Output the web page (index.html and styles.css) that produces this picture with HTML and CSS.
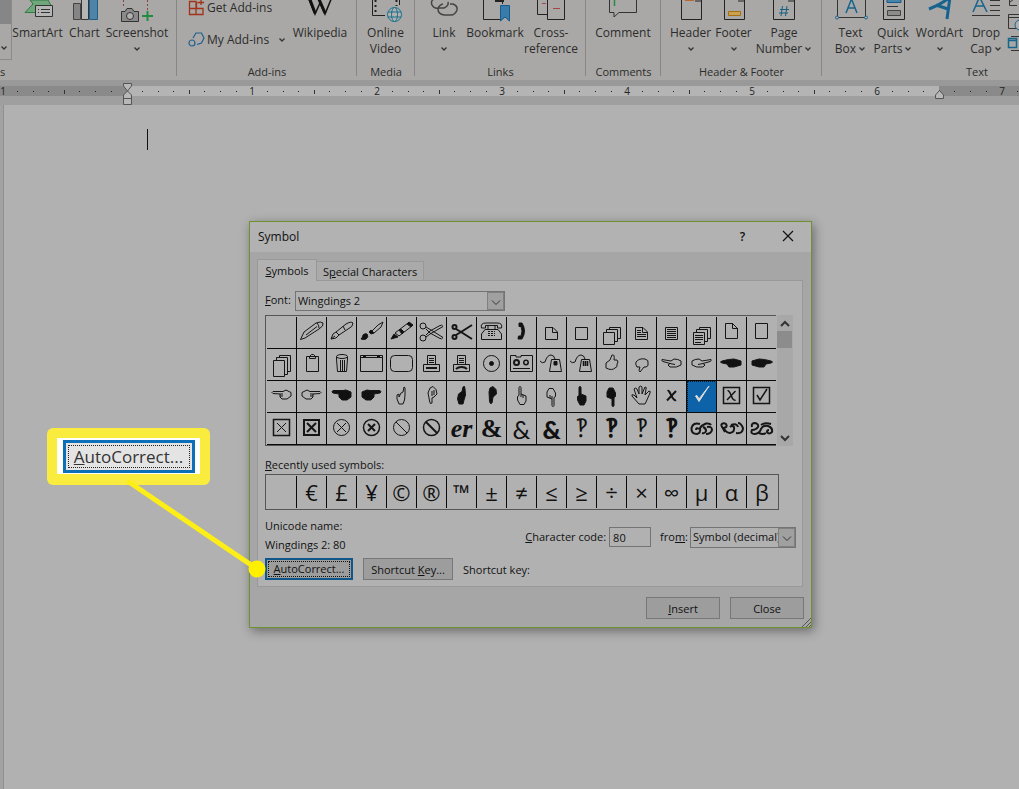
FILE: index.html
```html
<!DOCTYPE html>
<html lang="en">
<head>
<meta charset="utf-8">
<title>Symbol</title>
<link rel="stylesheet" href="styles.css">
</head>
<body>
<svg class="defs" aria-hidden="true">
  <defs>
    <symbol id="chev"><path d="M1.500 1.500L4 4L6.500 1.500" fill="none" stroke="#333" stroke-width="1.300"/></symbol>
    <symbol id="pen"><path d="M3.500 22.500L7 15L19 6Q24 4 26 6Q27 9 22 12L8 21ZM9 18L20 9.500M20 6Q22 8 22 11"/></symbol>
    <symbol id="nib"><path d="M4 22L6 17L9 15L19 7Q24 4 26 6Q26 10 21 12L12 18L9 21ZM9 15L12 18M16 9L18 13M4 22L8 19"/></symbol>
    <symbol id="brush"><path d="M14 15L21 8L26 5L24 10L17 16Z"/><path class="f" d="M4 22Q6 20 6 18Q8 16 10 17Q12 20 9 22Q7 23 4 22ZM12 15L14 13L17 16L14 17Z"/></symbol>
    <symbol id="crayon"><path d="M8 16L21 6L25 9L12 19Z"/><path class="f" d="M4 22L7 17L11 20ZM12 13L14 12L17 15L15 17ZM20 7L22 5L26 8L24 10Z"/></symbol>
    <symbol id="sciss"><circle cx="6" cy="9" r="3"/><circle cx="6" cy="21" r="3"/><path d="M9 10L14 13L26 20.500Q25 23 22 21L13 16L9 12M9 20L13 17L26 9.500Q25 7 22 9L13 14L9 18"/></symbol>
    <symbol id="scissb"><g class="b"><circle cx="7.500" cy="10" r="2"/><circle cx="7.500" cy="20" r="2"/><path d="M9 12L14 15L25 22M9 18L14 15L25 8"/></g></symbol>
    <symbol id="phone"><path d="M4.500 11Q3 6 9 6H20Q26 6 24.500 11H20.500V8.500H8.500V11ZM8 12.500H21L24.500 17V22.500H4.500V17ZM11 8V12M18 8V12"/><path d="M11 14.500H18M11 16.500H18M11 18.500H18" stroke-dasharray="2 1"/></symbol>
    <symbol id="handset"><path class="f" d="M12 6H15Q20 14 15 22H11L11.500 19H14Q16 14 14 9.500H12Z"/></symbol>
    <symbol id="fold"><path d="M8.500 10.500H16L20.500 15V22.500H8.500ZM15.500 10V15.500H21"/></symbol>
    <symbol id="square"><path d="M8.500 10.500H20.500V22.500H8.500Z"/></symbol>
    <symbol id="stack"><path d="M6.500 15.500H17.500V27.500H6.500ZM9.500 15V12.500H20.500V24.500H18M12.500 12V10.500H23.500V21.500H21"/></symbol>
    <symbol id="foldtext"><use href="#fold"/><path d="M10 13.500H14M10 15.500H14M10 17.500H19M10 19.500H19"/></symbol>
    <symbol id="text"><use href="#square"/><path d="M10 12.500H19M10 14.500H19M10 16.500H19M10 18.500H19M10 20.500H19"/></symbol>
    <symbol id="stacktext"><use href="#stack"/><path d="M8 18.500H16M8 20.500H16M8 22.500H16M8 25.500H14"/></symbol>
    <symbol id="tallfold"><path d="M8.500 6.500H15.500L20.500 11.500V21.500H8.500ZM15.500 6V11.500H21"/></symbol>
    <symbol id="tall"><path d="M8.500 6.500H20.500V21.500H8.500Z"/></symbol>
    <symbol id="tallstack"><path d="M6.500 11.500H17.500V27.500H6.500ZM9.500 11V8.500H20.500V25.500H18M12.500 8V6.500H23.500V22.500H21"/></symbol>
    <symbol id="clip"><path d="M9.500 7.500H21.500V22.500H9.500ZM12.500 9.500V7.500L14.500 5.500H16.500L18.500 7.500V9.500Z"/></symbol>
    <symbol id="trash"><ellipse cx="15" cy="7.500" rx="5.500" ry="2"/><path d="M9.500 8V10L10.500 22.500H19.500L20.500 10V8M13.500 11V22M15.500 11V22M17.500 11V22"/></symbol>
    <symbol id="window"><path d="M3.500 6.500H25.500V22.500H3.500ZM3 8.500H26"/><path class="b" d="M6 7.500H9M20 7.500H23"/></symbol>
    <symbol id="round"><rect x="3.500" y="6.500" width="22" height="16" rx="4"/></symbol>
    <symbol id="printer"><path d="M10.500 15V6.500H18.500V15M6.500 15.500H22.500V22.500H6.500ZM12 9.500H17M12 11.500H17M12 13.500H17"/><path class="b" d="M9 19H20"/></symbol>
    <symbol id="fax"><path d="M10.500 15V6.500H18.500V15M6.500 15.500H22.500V22.500H6.500ZM12 9.500H17M12 11.500H17M12 13.500H17"/><path class="b" d="M9 20Q11 18 14.500 18Q18 18 20 20"/></symbol>
    <symbol id="disc"><circle cx="14.500" cy="14.500" r="8"/><circle class="f" cx="14.500" cy="14.500" r="2"/></symbol>
    <symbol id="tape"><path d="M3.500 6.500H9V8H14V6.500H25.500V22.500H3.500ZM6 19.500H23"/><circle class="b" cx="9.500" cy="13.500" r="2.500"/><circle class="m" cx="19" cy="13.500" r="2.200"/></symbol>
    <symbol id="mouse"><path d="M3 12Q5 15 8 13Q10 6 14 6Q17 6 18 10M14.500 10.500H22.500L24.500 22.500H12.500Z"/><path class="f" d="M17 12.500H20V16H17Z"/></symbol>
    <symbol id="mouse3"><path d="M3 12Q5 15 8 13Q10 6 14 6Q17 6 18 10M14.500 10.500H22.500L24.500 22.500H12.500Z"/><path class="m" d="M16.500 12V17M18.500 12V17M20.500 12V17"/></symbol>
    <symbol id="thup"><path d="M9 14L13 11L15 6Q18 5 17 11H20Q22 13 20 15Q21 18 18 19Q15 22 9 19Z"/></symbol>
    <symbol id="thdn"><path d="M9 13Q12 9 18 10Q22 11 21 14Q22 17 19 18L17 18L13 23Q11 22 13 18H10Q8 15 9 13Z"/></symbol>
    <symbol id="left"><path d="M6 10.500H16L19 9L22 10.500L24 11.500V15L20 18H15L13 16V13L6 12.500Q4 11.500 6 10.500ZM13 13H16M13 15H16"/></symbol>
    <symbol id="left2"><path d="M5 10.500L14 12L17 10Q21 10 24 12V16Q20 19 13 18L11 16L13 14.500L6 12.500Q4 11.500 5 10.500ZM13 14.500L18 15.500"/></symbol>
    <symbol id="leftb"><path class="f" d="M6 9.500H16L19 9L24 11V16L20 19H15L12 16V13L6 12Q4 11 6 9.500Z"/></symbol>
    <symbol id="leftb2"><path class="f" d="M5 12Q12 10 17 10L24 12V16L17 18H12L10 15L5 14Q2 13 5 12Z"/></symbol>
    <symbol id="up"><path d="M17 6Q18.500 6 18 9V14L17.500 19L16 23H12L10 18V14L12 13V16L14 12L16 11Z"/></symbol>
    <symbol id="up2"><path d="M12 17L11 12L13 7L16 5.500L19 8.500L20 13L17 16L15 17V22Q13 24 12.500 20ZM15 10V15M17 9V14"/></symbol>
    <symbol id="upb"><path class="f" d="M16 6Q18 4 18 8L18.500 14L17 19L16 23H12L10.500 18L11.500 13L15 10.500Z"/></symbol>
    <symbol id="dnb"><path class="f" d="M12 11L13 7L16 5.500L19 8.500L19.500 13L16 16L15 22Q13 24 12.500 20Z"/></symbol>
    <symbol id="index"><path d="M12 6.500Q13 4 14 6.500V13L19 15V20L17 23.500H13L10.500 19V15.500L12 14.500ZM14 13V16M16 14V17"/></symbol>
    <symbol id="indexb"><path class="f" d="M12 6.500Q13 4 14 6.500V13L19 15V20L17 24H13L10.500 19V15.500L12 14.500Z"/></symbol>
    <symbol id="hand"><path d="M12 23L5 15Q4 13 7 14L10 17L7 8Q8 6 10 8L12 13L12 6Q14 4 15 6V13L18 6Q20 6 19 8L18 14L22 10Q24 10 23 12L19 21L18 23Z"/></symbol>
    <symbol id="x"><path class="b" d="M10.500 10Q12 9 14 14Q17 20 19 19M19 10L10 19.500"/></symbol>
    <symbol id="check"><path class="w" d="M8.500 15L10 14.500L12 18L22 5L12 20.500Z"/></symbol>
    <symbol id="xbox"><path class="m" d="M6.500 6.500H22.500V22.500H6.500Z"/><path class="m" d="M10.500 10Q12 9 14 14Q16 20 18.500 19M18.500 10L10 19"/></symbol>
    <symbol id="cbox"><path class="m" d="M6.500 6.500H22.500V22.500H6.500Z"/><path class="m" d="M10 14L13 19L20 8"/></symbol>
    <symbol id="bx"><path class="m" d="M6.500 6.500H22.500V22.500H6.500Z"/><path d="M10 10L19 19M19 10L10 19"/></symbol>
    <symbol id="bxb"><path class="b" d="M7 7H22V22H7ZM10 10L19 19M19 10L10 19"/></symbol>
    <symbol id="cx"><circle cx="14.500" cy="14.500" r="8"/><path d="M10 10L19 19M19 10L10 19"/></symbol>
    <symbol id="cxb"><circle class="m" cx="14.500" cy="14.500" r="8"/><path class="b" d="M11 11L18 18M18 11L11 18"/></symbol>
    <symbol id="no"><circle cx="14.500" cy="14.500" r="8"/><path d="M9 9L20 20"/></symbol>
    <symbol id="nob"><g class="m"><circle cx="14.500" cy="14.500" r="8"/><path class="b" d="M9 9L20 20"/></g></symbol>
    <symbol id="orn1"><path class="b" d="M13 11Q6 9 4.500 15Q4 21 10 21Q14 20 13 15Q15 12 19 10.500Q23 10 24 12M12 16Q9 14 9 17M16 14Q19 15 19 18Q18 21 15 20M20 14Q25 13 25 17Q24 21 19 21"/></symbol>
    <symbol id="orn2"><path class="b" d="M4 12Q6 9 9 11Q11 14 7 15Q9 20 13 20Q18 19 17 14Q15 12 13 14M14 12Q20 10 21 14M19 20Q26 21 26 15Q24 10 21 10M4 12L8 19"/></symbol>
    <symbol id="orn3"><path class="b" d="M5 14Q4 10 8 10Q12 11 11 14Q9 17 5 17Q3 21 8 21Q13 20 14 16Q16 12 21 13Q26 15 25 19Q22 22 20 19Q20 17 22 17M12 20Q16 22 19 20M14 12Q18 9 24 11"/></symbol>
  </defs>
</svg>

<header class="ribbon">
  <section class="group g-illus">
    <div class="tools">
      <div class="gallery"><span></span><svg class="chev"><use href="#chev"/></svg></div>
      <button class="tool t51"><svg><path d="M12 0L15 4L7 12.500H18V5.500H33L30 0Z" fill="#6fa77b" stroke="#2e7b45"/><path d="M17.500 5.500H34.500V16.500H17.500Z" fill="#b5b5b5" stroke="#333"/><path d="M20 9.500H21M23 9.500H32M20 12.500H21M23 12.500H32" stroke="#333"/></svg>SmartArt</button>
      <button class="tool t43"><svg><path d="M8.500 3.500H15.500V19.500H8.500Z" fill="#858585" stroke="#444"/><path d="M16.500 -2V19.500H23.500V-2Z" fill="#b5b5b5" stroke="#333"/><path d="M24.500 -2V19.500H32.500V-2Z" fill="#4e84a8" stroke="#215f88"/></svg>Chart</button>
      <button class="tool t62"><svg><path d="M6.500 0V8M30.500 0V10" stroke="#844" stroke-dasharray="2 2"/><path d="M4.500 11.500H8L10 8.500H15L17 11.500H21.500V21.500H4.500Z" fill="#8a8a8a" stroke="#333"/><circle cx="13" cy="16" r="3.500" fill="#b0b0b0" stroke="#333"/><path d="M30.500 11V21M25 16H36" stroke="#238b42" stroke-width="2"/></svg>Screenshot<svg class="chev"><use href="#chev"/></svg></button>
    </div>
    <h2 class="cut">s</h2>
  </section>
  <section class="group g-add">
    <div class="tools">
      <div class="addins">
        <button><svg class="ic"><path d="M1.500 1.500H8V14.500H1.500ZM1.500 8.500H15V14.500H8M8.500 8V2M13 -1V5M9.500 2.500H16" fill="none" stroke="#a03318" stroke-width="1.300"/></svg>Get Add-ins</button>
        <button><svg class="ic"><path d="M5 6L8 1H13.500L16 6L13.500 11L9 12.500" fill="none" stroke="#205f8e" stroke-width="1.200"/><circle cx="4" cy="11" r="3" fill="none" stroke="#205f8e" stroke-width="1.200"/></svg>My Add-ins<svg class="chev"><use href="#chev"/></svg></button>
      </div>
      <button class="tool t62"><svg><path d="M8 -3L15 14L20 3L25 14L32 -3" fill="none" stroke="#111" stroke-width="1.500"/><path d="M9 -3L15 13M18 -3L25 13" stroke="#111" stroke-width="3"/></svg>Wikipedia</button>
    </div>
    <h2>Add-ins</h2>
  </section>
  <section class="group g-media">
    <div class="tools">
      <button class="tool t57"><svg><path d="M6.500 0V15.500H19M33.500 0V5" fill="none" stroke="#222"/><path d="M9.500 0V15M30.500 0V6" stroke="#222" stroke-width="2" stroke-dasharray="2 3"/><g fill="#b0b0b0" stroke="#15708c"><circle cx="28.500" cy="14.500" r="7"/><ellipse cx="28.500" cy="14.500" rx="3" ry="7"/><path d="M22 12H35M22 17H35"/></g></svg>Online<br>Video</button>
    </div>
    <h2>Media</h2>
  </section>
  <section class="group g-links">
    <div class="tools">
      <button class="tool t54"><svg><g fill="none" stroke="#444" stroke-width="1.500"><path d="M18 -2H12Q6 0 8 5Q10 9 15 8H20Q25 6 24 2"/><path d="M26 4H29Q34 6 33 10Q31 15 27 15H20Q14 14 14 9Q15 5 19 4"/></g></svg>Link<svg class="chev"><use href="#chev"/></svg></button>
      <button class="tool t56"><svg><path d="M8.500 0V19.500H25M27.500 4V0" fill="none" stroke="#222"/><path d="M20 1H29" stroke="#222" stroke-width="2"/><path d="M25.500 5.500H34.500V21L30 17L25.500 21Z" fill="#397ca9" stroke="#175b8c"/></svg>Bookmark</button>
      <button class="tool t58"><svg><path d="M6.500 0V14.500H16M16.500 0V19.500H33.500V0" fill="none" stroke="#222"/><path d="M11 3.500H15M22 8.500H29" stroke="#a34545"/></svg>Cross-<br>reference</button>
    </div>
    <h2>Links</h2>
  </section>
  <section class="group g-comm">
    <div class="tools">
      <button class="tool t74"><svg><path d="M6.500 0V12.500H11V17L16 12.500H33.500V0" fill="none" stroke="#333"/><path d="M11.500 0V6" stroke="#268a46" stroke-width="1.500"/></svg>Comment</button>
    </div>
    <h2>Comments</h2>
  </section>
  <section class="group g-head">
    <div class="tools">
      <button class="tool t43"><svg><path d="M10.500 0V19.500H30.500V0" fill="none" stroke="#222"/><path d="M14 0H23" stroke="#b8682c" stroke-width="2"/><path d="M24 1H31" stroke="#222"/></svg>Header<svg class="chev"><use href="#chev"/></svg></button>
      <button class="tool t43"><svg><path d="M10.500 0V19.500H30.500V0M24 1H31" fill="none" stroke="#222"/><path d="M14.500 11.500H26.500V15.500H14.500Z" fill="#c9a250" stroke="#a86e12"/></svg>Footer<svg class="chev"><use href="#chev"/></svg></button>
      <button class="tool t58"><svg><path d="M9.500 0V19.500H30.500V0M24 1H31" fill="none" stroke="#222"/><path d="M18.500 6L17 16M23 6L21.500 16M16 9.500H25M15 13H24" stroke="#155f83"/></svg>Page<span class="line">Number<svg class="chev"><use href="#chev"/></svg></span></button>
    </div>
    <h2>Header &amp; Footer</h2>
  </section>
  <section class="group g-text">
    <div class="tools">
      <button class="tool t43"><svg><path d="M6.500 0V17.500H34.500V0" fill="none" stroke="#333"/><circle cx="6" cy="17.500" r="1.500" fill="#b0b0b0" stroke="#17648c"/><circle cx="35" cy="17.500" r="1.500" fill="#b0b0b0" stroke="#17648c"/><path d="M15 13L20.500 -1L26 13M17 8H24" fill="none" stroke="#17648c" stroke-width="1.500"/></svg>Text<span class="line">Box<svg class="chev"><use href="#chev"/></svg></span></button>
      <button class="tool t42"><svg><path d="M10.500 0V19.500H31.500V0" fill="none" stroke="#222"/><path d="M14 -1H28V2.500H14Z" fill="#4685a9" stroke="#175b8c"/><path d="M14 6.500H25" stroke="#333"/><path d="M14.500 10.500H27.500V15.500H14.500Z" fill="#8c8c8c" stroke="#444"/></svg>Quick<span class="line">Parts<svg class="chev"><use href="#chev"/></svg></span></button>
      <button class="tool t51"><svg><path d="M9 9Q22 4 30 -3L27 19M16 5L28 9" fill="none" stroke="#17638f" stroke-width="3"/></svg>WordArt<svg class="chev"><use href="#chev"/></svg></button>
      <button class="tool t42"><svg><path d="M7 12L13.500 -3L21 12M9.500 6H18" fill="none" stroke="#17648c" stroke-width="1.500"/><path d="M24 0.500H34M24 5.500H34M24 10.500H34M6 15.500H34" stroke="#333"/></svg>Drop<span class="line">Cap<svg class="chev"><use href="#chev"/></svg></span></button>
      <svg class="side"><path d="M10 5.500H2.500V0M3 2L10 -3" fill="none" stroke="#333"/><path d="M12 28.500H1.500V14.500H12M1 17.500H12" fill="none" stroke="#333"/><circle cx="13" cy="25" r="5" fill="#b0b0b0" stroke="#17648c"/><path d="M1.500 38.500H9.500V47.500H1.500ZM1.500 40.500H9.500" fill="none" stroke="#17648c" stroke-width="1.500"/><path d="M4 36.500H14M4 50.500H14" stroke="#333"/></svg>
    </div>
    <h2>Text</h2>
  </section>
</header>

<div class="ruler">
  <svg>
    <defs><pattern id="ticks" x="2" y="0" width="125" height="10" patternUnits="userSpaceOnUse"><path d="M15 5.500h1M31 5.500h1M46 5.500h1M77 5.500h1M93 5.500h1M109 5.500h1" stroke="#222"/><path d="M62.500 4V8" stroke="#333"/></pattern></defs>
    <rect width="100%" height="6" fill="#999"/>
    <rect width="100%" height="10" y="6" fill="#8a8a8a"/>
    <rect x="127" width="812" height="10" y="6" fill="#b4b4b4"/>
    <g transform="translate(0 6)"><rect width="100%" height="10" fill="url(#ticks)"/></g>
    <g class="nums"><text x="3" y="15">1</text><text x="252" y="15">1</text><text x="377" y="15">2</text><text x="502" y="15">3</text><text x="627" y="15">4</text><text x="752" y="15">5</text><text x="877" y="15">6</text><text x="1002" y="15">7</text></g>
    <path d="M123.500 3.500H131.500V6L127.500 11L123.500 6ZM127.500 11L131.500 15V24.500H123.500V15ZM123.500 18.500H131.500M935.500 18.500V15L939.500 10.500L943.500 15V18.500Z" fill="#b8b8b8" stroke="#555"/>
  </svg>
</div>

<main class="doc">
  <div class="caret"></div>

  <div class="dialog" role="dialog" aria-labelledby="dlg-title">
    <div class="titlebar">
      <h1 id="dlg-title">Symbol</h1>
      <button class="tb" aria-label="Help">?</button>
      <button class="tb" aria-label="Close window"><svg width="12" height="12"><path d="M1 1L11 11M11 1L1 11" stroke="#111" stroke-width="1.200"/></svg></button>
    </div>
    <div class="body">
      <div class="tabs" role="tablist">
        <button class="tab on" role="tab"><u>S</u>ymbols</button>
        <button class="tab" role="tab">S<u>p</u>ecial Characters</button>
      </div>
      <div class="panel">
        <div class="fontrow">
          <label for="font"><u>F</u>ont:</label>
          <span class="combo wide"><select id="font"><option>Wingdings 2</option></select><svg class="arrow"><path d="M4 7.500L8 11.500L12 7.500" fill="none" stroke="#333"/></svg></span>
        </div>
        <div class="gridbox">
          <div class="grid">
            <button></button>
            <button><svg><use href="#pen"/></svg></button>
            <button><svg><use href="#nib"/></svg></button>
            <button><svg><use href="#brush"/></svg></button>
            <button><svg><use href="#crayon"/></svg></button>
            <button><svg><use href="#sciss"/></svg></button>
            <button><svg><use href="#scissb"/></svg></button>
            <button><svg><use href="#phone"/></svg></button>
            <button><svg><use href="#handset"/></svg></button>
            <button><svg><use href="#fold"/></svg></button>
            <button><svg><use href="#square"/></svg></button>
            <button><svg><use href="#stack"/></svg></button>
            <button><svg><use href="#foldtext"/></svg></button>
            <button><svg><use href="#text"/></svg></button>
            <button><svg><use href="#stacktext"/></svg></button>
            <button><svg><use href="#tallfold"/></svg></button>
            <button><svg><use href="#tall"/></svg></button>

            <button><svg><use href="#tallstack"/></svg></button>
            <button><svg><use href="#clip"/></svg></button>
            <button><svg><use href="#trash"/></svg></button>
            <button><svg><use href="#window"/></svg></button>
            <button><svg><use href="#round"/></svg></button>
            <button><svg><use href="#printer"/></svg></button>
            <button><svg><use href="#fax"/></svg></button>
            <button><svg><use href="#disc"/></svg></button>
            <button><svg><use href="#tape"/></svg></button>
            <button><svg><use href="#mouse"/></svg></button>
            <button><svg><use href="#mouse3"/></svg></button>
            <button><svg><use href="#thup"/></svg></button>
            <button><svg><use href="#thdn"/></svg></button>
            <button><svg><use href="#left2"/></svg></button>
            <button><svg class="flip"><use href="#left2"/></svg></button>
            <button><svg><use href="#leftb2"/></svg></button>
            <button><svg class="flip"><use href="#leftb2"/></svg></button>

            <button><svg><use href="#left"/></svg></button>
            <button><svg class="flip"><use href="#left"/></svg></button>
            <button><svg><use href="#leftb"/></svg></button>
            <button><svg class="flip"><use href="#leftb"/></svg></button>
            <button><svg><use href="#up"/></svg></button>
            <button><svg><use href="#up2"/></svg></button>
            <button><svg><use href="#upb"/></svg></button>
            <button><svg><use href="#dnb"/></svg></button>
            <button><svg><use href="#index"/></svg></button>
            <button><svg class="turn"><use href="#index"/></svg></button>
            <button><svg><use href="#indexb"/></svg></button>
            <button><svg class="turn"><use href="#indexb"/></svg></button>
            <button><svg><use href="#hand"/></svg></button>
            <button><svg><use href="#x"/></svg></button>
            <button class="sel"><svg><use href="#check"/></svg></button>
            <button><svg><use href="#xbox"/></svg></button>
            <button><svg><use href="#cbox"/></svg></button>

            <button><svg><use href="#bx"/></svg></button>
            <button><svg><use href="#bxb"/></svg></button>
            <button><svg><use href="#cx"/></svg></button>
            <button><svg><use href="#cxb"/></svg></button>
            <button><svg><use href="#no"/></svg></button>
            <button><svg><use href="#nob"/></svg></button>
            <button class="serif bold ital">er</button>
            <button class="serif bold">&amp;</button>
            <button class="amp">&amp;</button>
            <button class="amp bold">&amp;</button>
            <button class="serif">‽</button>
            <button class="serif bold">‽</button>
            <button class="serif">‽</button>
            <button class="serif bold">‽</button>
            <button><svg><use href="#orn1"/></svg></button>
            <button><svg><use href="#orn2"/></svg></button>
            <button><svg><use href="#orn3"/></svg></button>
          </div>
          <div class="scroll">
            <svg><path d="M4 11L8 7L12 11" fill="none" stroke="#333" stroke-width="2"/></svg>
            <div class="thumb"></div>
            <svg><path d="M4 6L8 10L12 6" fill="none" stroke="#333" stroke-width="2"/></svg>
          </div>
        </div>
        <div class="caption"><u>R</u>ecently used symbols:</div>
        <div class="recent">
          <button></button><button>€</button><button>£</button><button>¥</button><button>©</button><button>®</button><button>™</button><button>±</button><button>≠</button><button>≤</button><button>≥</button><button>÷</button><button>×</button><button>∞</button><button>μ</button><button>α</button><button>β</button>
        </div>
        <div class="info">
          <div class="names"><div>Unicode name:</div><div>Wingdings 2: 80</div></div>
          <div class="code">
            <label for="code"><u>C</u>haracter code:</label><input id="code" value="80">
            <label class="from" for="from">fro<u>m</u>:</label>
            <span class="combo"><select id="from"><option>Symbol (decimal)</option></select><svg class="arrow"><path d="M4 7.500L8 11.500L12 7.500" fill="none" stroke="#333"/></svg></span>
          </div>
        </div>
        <div class="actions">
          <button class="btn focus"><span><u>A</u>utoCorrect...</span></button>
          <button class="btn short">Shortcut <u>K</u>ey...</button>
          <span>Shortcut key:</span>
        </div>
      </div>
      <div class="footer">
        <button class="btn"><u>I</u>nsert</button>
        <button class="btn">Close</button>
      </div>
    </div>
    <svg class="grip"><path d="M1 10L10 1M5 10L10 5M8 10L10 8" stroke="#555"/></svg>
  </div>

  <div class="callout"><div class="white"><button class="big"><span><u>A</u>utoCorrect...</span></button></div></div>
  <svg class="pointer"><path d="M10 6L138 93" stroke="#fdee17" stroke-width="5" stroke-linecap="round"/><circle cx="138" cy="93" r="8.500" fill="#fff000"/></svg>
</main>
</body>
</html>
```
FILE: styles.css
```css
* { box-sizing: border-box; }
body {
  margin: 0;
  min-height: 100vh;
  display: flex;
  flex-direction: column;
  overflow: hidden;
  background: #b1b1b1;
  font-family: "Open Sans", "Noto Sans", sans-serif;
  font-size: 11px;
  color: #111;
}
button, input, select { font: inherit; color: inherit; }
button { border: 0; padding: 0; background: none; }
h1, h2 { margin: 0; font-size: inherit; font-weight: normal; }
.defs { position: absolute; width: 0; height: 0; }
.chev { width: 8px; height: 6px; }

.ribbon {
  display: flex;
  height: 80px;
  overflow: hidden;
  background: #a9a8a6;
  color: #2c2c2c;
  font-size: 12px;
  line-height: 16px;
}
.group { display: flex; flex-direction: column; flex: none; position: relative; }
.group::after {
  content: "";
  position: absolute;
  right: 0;
  top: 0;
  width: 1px;
  height: 76px;
  background: #868686;
}
.group h2 { text-align: center; font-size: 11px; }
.group h2.cut { text-align: left; }
.g-illus { width: 177px; }
.g-add { width: 180px; }
.g-media { width: 58px; }
.g-links { width: 171px; }
.g-comm { width: 75px; }
.g-head { width: 161px; }
.g-text { width: 310px; }
.tools { display: flex; height: 64px; }
.g-head .tools { padding-left: 8px; }
.g-text .tools { padding-left: 7px; }
.g-links .tools { padding-left: 2px; }
.tool {
  display: flex;
  flex-direction: column;
  align-items: center;
  line-height: 16px;
  white-space: nowrap;
}
.tool > svg:first-child { width: 40px; height: 25px; flex: none; }
.tool > .chev { margin-top: 5px; }
.line { display: flex; align-items: center; gap: 2px; }
.t42 { width: 42px; } .t43 { width: 43px; } .t51 { width: 51px; }
.t54 { width: 54px; } .t56 { width: 50px; } .t57 { width: 57px; }
.t58 { width: 58px; } .t62 { width: 62px; } .t74 { width: 74px; }
.g-links .t56 { width: 48px; }
.g-links .t58 { width: 64px; }
.gallery {
  width: 12px;
  height: 60px;
  border: solid #8a8a8a;
  border-width: 0 1px 1px 0;
}
.gallery span { display: block; height: 24px; background: #868686; margin-bottom: 21px; }
.gallery .chev { display: block; }
.addins { display: flex; flex-direction: column; gap: 16px; width: 112px; padding-left: 11px; }
.addins button { display: flex; align-items: center; height: 16px; white-space: nowrap; gap: 2px; font-size: 12px; }
.addins .ic { width: 17px; height: 16px; flex: none; }
.addins .chev { margin-left: 7px; flex: none; }
.side { width: 12px; height: 56px; }

.ruler { height: 25px; background: #9f9f9f; }
.ruler svg { display: block; width: 100%; height: 25px; }
.nums { font-size: 10px; text-anchor: middle; fill: #222; }

.doc {
  position: relative;
  flex: 1;
  border-left: 3px solid #a2a2a2;
  box-shadow: inset 1px 0 #909090;
}
.caret { width: 1px; height: 21px; margin: 24px 0 0 144px; background: #111; }

.dialog {
  position: absolute;
  left: 246px;
  top: 116px;
  width: 563px;
  border: 1px solid #6f9130;
  background: #a6a6a6;
  box-shadow: 2px 3px 10px rgba(0, 0, 0, .4);
}
.titlebar { display: flex; align-items: center; height: 30px; padding: 0 1px 2px 8px; background: #b2b2b2; }
.titlebar h1 { flex: 1; font-size: 12px; }
.tb { width: 45px; height: 28px; font-weight: 600; font-size: 12px; display: flex; align-items: center; justify-content: center; }
.body { padding: 7px 7px 8px; }
.tabs { display: flex; align-items: flex-end; height: 21px; }
.tab { height: 19px; padding: 0 6px; border: 1px solid #989898; border-bottom: 0; background: #aaa; }
.tab.on { height: 22px; width: 60px; background: #b1b1b1; z-index: 1; margin-bottom: -1px; }
.tab + .tab { border-left: 0; }
.panel { border: 1px solid #999; background: #b1b1b1; padding: 10px 6px 6px 7px; margin-right: 1px; }
.fontrow { display: flex; align-items: center; gap: 4px; }
.fontrow label { line-height: 14px; padding-bottom: 2px; }
.combo { display: grid; width: 106px; height: 21px; border: 1px solid #747474; }
.combo.wide { width: 210px; height: 20px; }
.combo select {
  grid-area: 1 / 1;
  appearance: none;
  border: 0;
  min-width: 0;
  width: 100%;
  padding: 0 0 1px 2px;
  background: none;
  border-radius: 0;
}
.arrow {
  grid-area: 1 / 1;
  justify-self: end;
  width: 17px;
  height: 100%;
  background: #a0a0a0;
  border: 1px solid #808080;
  pointer-events: none;
}
.gridbox { display: flex; margin-top: 4px; height: 131px; }
.grid {
  display: grid;
  grid-template-columns: repeat(17, 30px);
  grid-auto-rows: 32px;
  width: 511px;
  padding: 1px 0 0 1px;
  border: solid #555;
  border-width: 1px 0 1px 1px;
  overflow: hidden;
}
.grid button {
  display: block;
  border: solid #0a0a0a;
  border-width: 0 1px 1px 0;
  height: 32px;
  overflow: hidden;
  line-height: 30px;
}
.grid button:nth-child(17n) { border-right: 0; }
.grid svg { display: block; width: 29px; height: 31px; fill: none; stroke: #151515; stroke-width: 1; }
.flip { transform: scaleX(-1); }
.turn { transform: rotate(180deg); }
.f { fill: #111; }
.m { stroke-width: 1.5; }
.b { stroke-width: 2; }
.w { fill: #ddd; stroke: #ddd; stroke-width: 1; }
.grid .sel { background: #0e62a8; outline: 1px dotted #111; outline-offset: -1px; }
.grid .serif { font-family: "Liberation Serif", serif; font-size: 26px; }
.grid .amp { font-family: "Lato", sans-serif; font-size: 25px; }
.grid .bold { font-weight: 900; }
.grid .ital { font-style: italic; }
.scroll { display: flex; flex-direction: column; width: 16px; background: #a8a8a8; margin-left: 1px; }
.scroll svg { width: 16px; height: 16px; flex: none; }
.scroll svg:last-child { margin-top: auto; }
.thumb { height: 17px; background: #8c8c8c; margin-right: 1px; }
.caption { margin-top: 11px; line-height: 15px; }
.recent {
  display: grid;
  grid-template-columns: repeat(17, 30px);
  width: 514px;
  height: 36px;
  padding: 1px;
  margin-top: 2px;
  border: 1px solid #555;
}
.recent button { border-right: 1px solid #0a0a0a; font-size: 22px; line-height: 30px; }
.recent button:last-child { border-right: 0; }
.info { display: flex; justify-content: space-between; margin-top: 6px; height: 39px; }
.names { line-height: 19px; white-space: nowrap; }
.code { display: flex; align-items: center; height: 39px; padding-top: 3px; white-space: nowrap; }
.code label { padding-bottom: 1px; }
.code input { width: 42px; height: 20px; margin: 0 9px 0 3px; border: 1px solid #747474; border-radius: 0; background: none; padding: 0 3px; }
.code .from { margin-right: 2px; }
.actions { display: flex; align-items: center; gap: 10px; margin-top: 3px; }
.btn {
  width: 74px;
  height: 22px;
  border: 1px solid #777;
  background: #9d9d9d;
  white-space: nowrap;
}
.btn.short { width: 90px; }
.btn.focus { width: 88px; border: 2px solid #10568a; padding: 1px; }
.focus span { display: block; line-height: 14px; border: 1px dotted #111; }
.footer { display: flex; justify-content: flex-end; gap: 10px; padding-top: 10px; }
.grip { position: absolute; right: 0; bottom: 0; width: 10px; height: 10px; }

.callout {
  position: absolute;
  left: 44px;
  top: 323px;
  width: 163px;
  height: 57px;
  padding: 10px;
  border-radius: 6px;
  background: #f9ec3f;
}
.white { display: flex; justify-content: center; align-items: center; height: 36px; background: #fff; }
.big {
  width: 132px;
  height: 33px;
  padding: 2px;
  border: 3px solid #0c6fb7;
  background: #e4e4e4;
  font-size: 17px;
  color: #333;
}
.big span { display: block; line-height: 21px; border: 1px dotted #222; }
.pointer { position: absolute; left: 116px; top: 371px; width: 150px; height: 104px; fill: none; }
```
